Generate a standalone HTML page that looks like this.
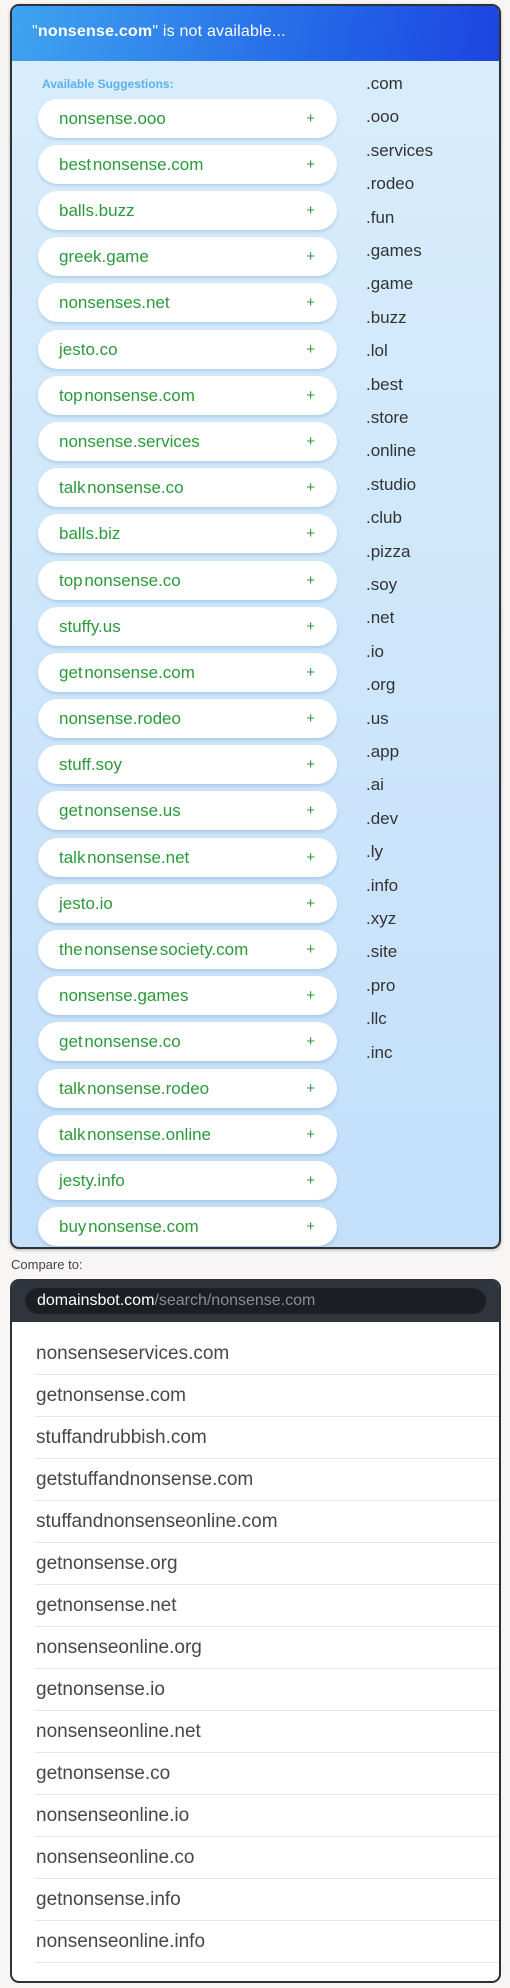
<!DOCTYPE html>
<html><head><meta charset="utf-8"><style>
*{margin:0;padding:0;box-sizing:border-box}
body{width:510px;height:1988px;background:#f7f6f5;font-family:"Liberation Sans",sans-serif;position:relative;overflow:hidden}
.p1{position:absolute;left:10px;top:4px;width:491px;height:1245px;border:2px solid #2d3138;border-radius:9px;overflow:hidden;background:linear-gradient(180deg,#d9eefc,#c3dffa);box-shadow:0 1px 3px rgba(0,0,0,.3)}
.hd{height:55px;background:linear-gradient(100deg,#3fa4f0,#2160e6 70%,#1e44e0);color:#fff;font-size:16px;padding:17px 0 0 20px;letter-spacing:.2px}
.hd b{font-weight:bold}
.lab{position:absolute;left:30px;top:71px;font-size:12px;font-weight:bold;color:#5cb0ec}
.pill{position:absolute;left:26px;width:299px;height:39px;background:#fff;border-radius:20px;box-shadow:0 2px 3px rgba(80,120,170,.25);color:#2a9a3a;font-size:17px;line-height:39px;padding-left:21px;word-spacing:-3px}
.pill span{position:absolute;right:22px;top:0;font-size:15px}
.tld{position:absolute;left:354px;font-size:17px;color:#333;line-height:20px}
.ct{position:absolute;left:11px;top:1257px;font-size:13px;color:#444}
.p2{position:absolute;left:10px;top:1279px;width:491px;height:704px;border:2px solid #2d3138;border-radius:9px;overflow:hidden;background:#fff}
.bar{height:41px;background:#30353d;padding-top:7px}
.url{margin-left:13px;width:461px;height:26px;border-radius:13px;background:#1c1e23;font-size:16px;color:#fff;padding:4px 0 0 12px}
.url i{font-style:normal;color:#8a8d93}
.it{position:absolute;left:23px;width:468px;height:42px;border-bottom:1px solid #e6e6e6;font-size:19px;color:#474747;line-height:42px;padding-left:1px}
</style></head><body>
<div class="p1">
<div class="hd">"<b>nonsense.com</b>" is not available...</div>
<div class="lab">Available Suggestions:</div>
<div class="pill" style="top:93px">nonsense.ooo<span>+</span></div>
<div class="pill" style="top:139px">best nonsense.com<span>+</span></div>
<div class="pill" style="top:185px">balls.buzz<span>+</span></div>
<div class="pill" style="top:231px">greek.game<span>+</span></div>
<div class="pill" style="top:277px">nonsenses.net<span>+</span></div>
<div class="pill" style="top:324px">jesto.co<span>+</span></div>
<div class="pill" style="top:370px">top nonsense.com<span>+</span></div>
<div class="pill" style="top:416px">nonsense.services<span>+</span></div>
<div class="pill" style="top:462px">talk nonsense.co<span>+</span></div>
<div class="pill" style="top:508px">balls.biz<span>+</span></div>
<div class="pill" style="top:555px">top nonsense.co<span>+</span></div>
<div class="pill" style="top:601px">stuffy.us<span>+</span></div>
<div class="pill" style="top:647px">get nonsense.com<span>+</span></div>
<div class="pill" style="top:693px">nonsense.rodeo<span>+</span></div>
<div class="pill" style="top:739px">stuff.soy<span>+</span></div>
<div class="pill" style="top:785px">get nonsense.us<span>+</span></div>
<div class="pill" style="top:832px">talk nonsense.net<span>+</span></div>
<div class="pill" style="top:878px">jesto.io<span>+</span></div>
<div class="pill" style="top:924px">the nonsense society.com<span>+</span></div>
<div class="pill" style="top:970px">nonsense.games<span>+</span></div>
<div class="pill" style="top:1016px">get nonsense.co<span>+</span></div>
<div class="pill" style="top:1063px">talk nonsense.rodeo<span>+</span></div>
<div class="pill" style="top:1109px">talk nonsense.online<span>+</span></div>
<div class="pill" style="top:1155px">jesty.info<span>+</span></div>
<div class="pill" style="top:1201px">buy nonsense.com<span>+</span></div>
<div class="tld" style="top:68px">.com</div>
<div class="tld" style="top:101px">.ooo</div>
<div class="tld" style="top:135px">.services</div>
<div class="tld" style="top:168px">.rodeo</div>
<div class="tld" style="top:202px">.fun</div>
<div class="tld" style="top:235px">.games</div>
<div class="tld" style="top:268px">.game</div>
<div class="tld" style="top:302px">.buzz</div>
<div class="tld" style="top:335px">.lol</div>
<div class="tld" style="top:369px">.best</div>
<div class="tld" style="top:402px">.store</div>
<div class="tld" style="top:435px">.online</div>
<div class="tld" style="top:469px">.studio</div>
<div class="tld" style="top:502px">.club</div>
<div class="tld" style="top:536px">.pizza</div>
<div class="tld" style="top:569px">.soy</div>
<div class="tld" style="top:602px">.net</div>
<div class="tld" style="top:636px">.io</div>
<div class="tld" style="top:669px">.org</div>
<div class="tld" style="top:703px">.us</div>
<div class="tld" style="top:736px">.app</div>
<div class="tld" style="top:769px">.ai</div>
<div class="tld" style="top:803px">.dev</div>
<div class="tld" style="top:836px">.ly</div>
<div class="tld" style="top:870px">.info</div>
<div class="tld" style="top:903px">.xyz</div>
<div class="tld" style="top:936px">.site</div>
<div class="tld" style="top:970px">.pro</div>
<div class="tld" style="top:1003px">.llc</div>
<div class="tld" style="top:1037px">.inc</div>
</div>
<div class="ct">Compare to:</div>
<div class="p2">
<div class="bar"><div class="url">domainsbot.com<i>/search/nonsense.com</i></div></div>
<div class="it" style="top:52px">nonsenseservices.com</div>
<div class="it" style="top:94px">getnonsense.com</div>
<div class="it" style="top:136px">stuffandrubbish.com</div>
<div class="it" style="top:178px">getstuffandnonsense.com</div>
<div class="it" style="top:220px">stuffandnonsenseonline.com</div>
<div class="it" style="top:262px">getnonsense.org</div>
<div class="it" style="top:304px">getnonsense.net</div>
<div class="it" style="top:346px">nonsenseonline.org</div>
<div class="it" style="top:388px">getnonsense.io</div>
<div class="it" style="top:430px">nonsenseonline.net</div>
<div class="it" style="top:472px">getnonsense.co</div>
<div class="it" style="top:514px">nonsenseonline.io</div>
<div class="it" style="top:556px">nonsenseonline.co</div>
<div class="it" style="top:598px">getnonsense.info</div>
<div class="it" style="top:640px">nonsenseonline.info</div>
</div>
</body></html>
